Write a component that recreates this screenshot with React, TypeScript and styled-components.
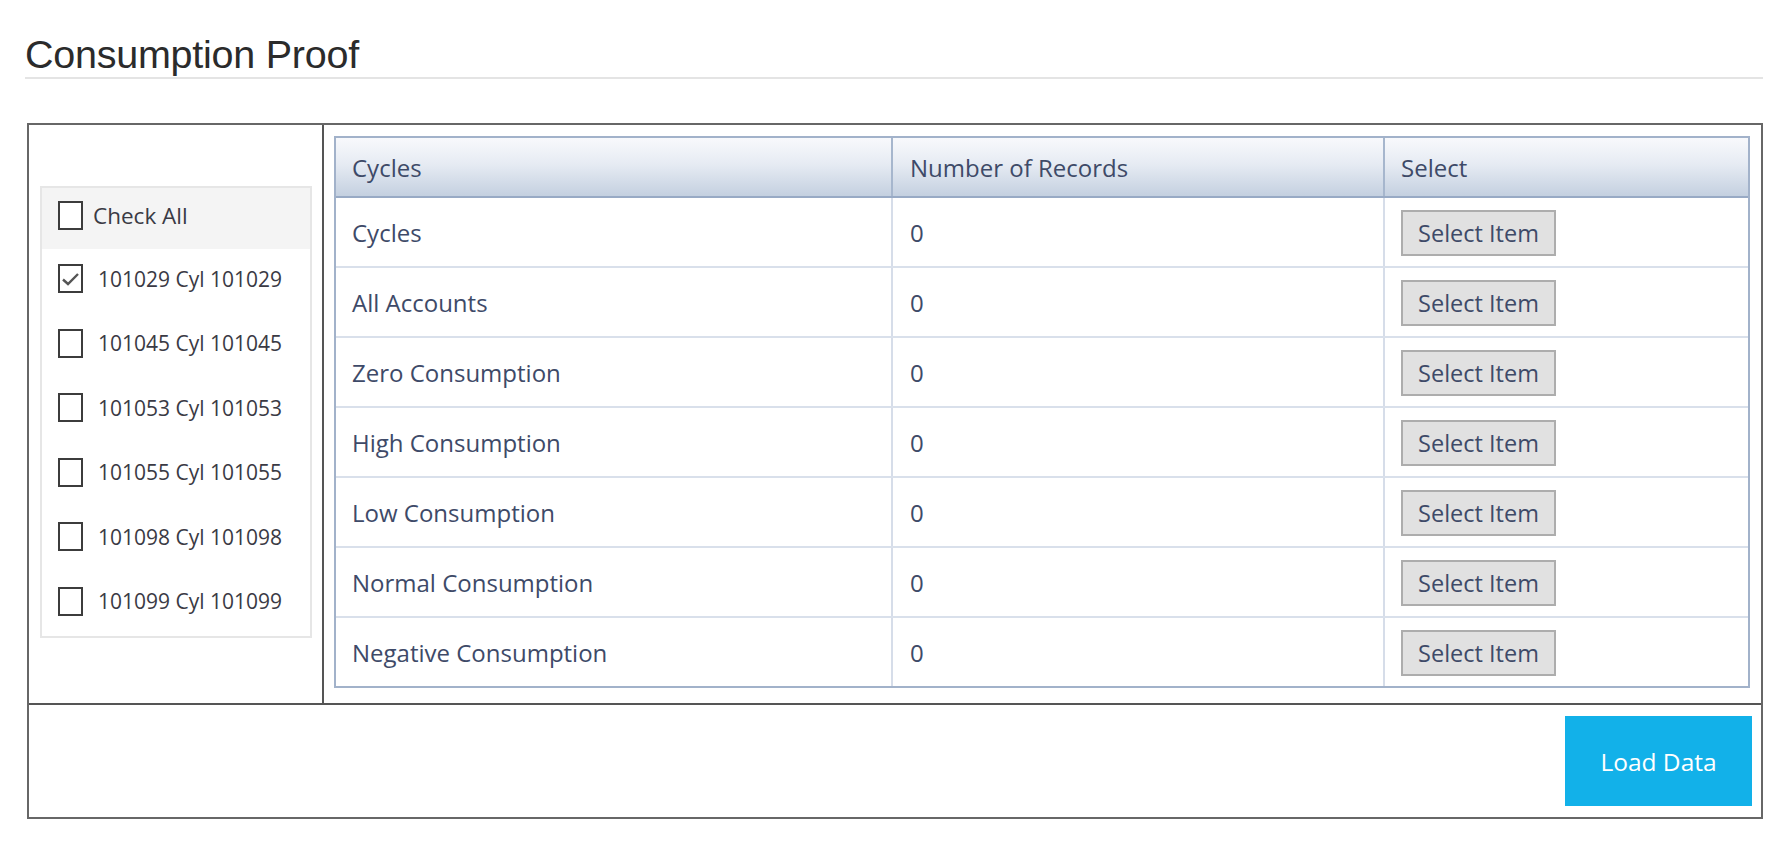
import React from "react";
import styled, { createGlobalStyle } from "styled-components";

const Global = createGlobalStyle`
  html, body { margin: 0; padding: 0; background: #ffffff; }
  body { font-family: "Open Sans", "Noto Sans", sans-serif; }
  * { box-sizing: border-box; }
`;

const Page = styled.div`
  width: 1780px;
  padding: 32px 0 0 25px;
`;

const Title = styled.h1`
  margin: 0;
  width: 1738px;
  height: 47px;
  font-family: "Liberation Sans", Arial, sans-serif;
  font-weight: 400;
  font-size: 39.5px;
  line-height: 45px;
  color: #2b2b2b;
  border-bottom: 2px solid #e4e4e4;
  letter-spacing: -0.25px;
`;

const Frame = styled.div`
  margin: 44px 0 0 2px;
  width: 1736px;
  height: 696px;
  border: 2px solid #676767;
  display: grid;
  grid-template-columns: 295px 1fr;
  grid-template-rows: 580px 1fr;
`;

const LeftPanel = styled.div`
  border-right: 2px solid #555555;
  border-bottom: 2px solid #555555;
  padding: 61px 0 0 11px;
`;

const RightPanel = styled.div`
  border-bottom: 2px solid #555555;
  padding: 11px 9px 0 10px;
`;

const Footer = styled.div`
  grid-column: 1 / span 2;
  display: flex;
  justify-content: flex-end;
  align-items: flex-start;
  padding: 11px 9px 0 0;
`;

const ListBox = styled.div`
  width: 272px;
  border: 2px solid #e6e6e6;
  display: flex;
  flex-direction: column;
`;

const ListRow = styled.label<{ $head?: boolean }>`
  display: flex;
  align-items: center;
  height: ${(p) => (p.$head ? "61px" : "64.5px")};
  padding-bottom: ${(p) => (p.$head ? "7px" : "5px")};
  background: ${(p) => (p.$head ? "#f4f4f4" : "#ffffff")};
  padding-left: 16px;
  gap: ${(p) => (p.$head ? "10px" : "15px")};
  font-size: ${(p) => (p.$head ? "22.5px" : "21px")};
  color: #3a3a44;
  white-space: nowrap;
  cursor: pointer;
`;

const Box = styled.span`
  flex: none;
  width: 25px;
  height: 29px;
  border: 2px solid #3c3c3c;
  background: #ffffff;
  display: flex;
  align-items: center;
  justify-content: center;
`;

const Table = styled.div`
  border: 2px solid #a2b2ca;
  width: 1416px;
`;

const Row = styled.div<{ $head?: boolean }>`
  display: grid;
  grid-template-columns: 557px 492px 1fr;
  height: ${(p) => (p.$head ? "60px" : "70px")};
  background: ${(p) =>
    p.$head ? "linear-gradient(to bottom, #f8f9fc 0%, #e6ebf3 45%, #c4d0e0 100%)" : "#ffffff"};
  border-bottom: 2px solid ${(p) => (p.$head ? "#98aac5" : "#d9e0eb")};
  &:last-child { border-bottom: none; height: 68px; }
`;

const Cell = styled.div<{ $head?: boolean }>`
  display: flex;
  align-items: center;
  padding-left: 16px;
  font-size: 24px;
  color: #3e4a68;
  white-space: nowrap;
  border-right: 2px solid ${(p) => (p.$head ? "#a6b6cd" : "#d6dde9")};
  &:nth-child(2) { padding-left: 17px; }
  &:last-child { border-right: none; padding-left: 16px; }
`;

const SelectButton = styled.button`
  width: 155px;
  height: 46px;
  margin-top: 1px;
  background: #e1e1e1;
  border: 2px solid #adadad;
  border-radius: 0;
  padding: 0;
  font-family: "Open Sans", "Noto Sans", sans-serif;
  font-size: 23.5px;
  color: #3e4a68;
  cursor: pointer;
`;

const LoadButton = styled.button`
  width: 187px;
  height: 90px;
  background: #12b1e9;
  border: none;
  border-radius: 0;
  color: #ffffff;
  font-family: "Open Sans", "Noto Sans", sans-serif;
  font-size: 24.5px;
  cursor: pointer;
`;

const cycles = [
  { id: "101029", checked: true },
  { id: "101045", checked: false },
  { id: "101053", checked: false },
  { id: "101055", checked: false },
  { id: "101098", checked: false },
  { id: "101099", checked: false },
];

const rows = [
  "Cycles",
  "All Accounts",
  "Zero Consumption",
  "High Consumption",
  "Low Consumption",
  "Normal Consumption",
  "Negative Consumption",
];

const CheckBox = ({ checked }: { checked: boolean }) => (
  <Box>
    {checked && (
      <svg width="19" height="16" viewBox="0 0 19 16">
        <path d="M2 8.5 L7 13 L17 3" fill="none" stroke="#555555" strokeWidth="2.4" />
      </svg>
    )}
  </Box>
);

export default function App() {
  return (
    <>
      <Global />
      <Page>
        <Title>Consumption Proof</Title>
        <Frame>
          <LeftPanel>
            <ListBox>
              <ListRow $head>
                <CheckBox checked={false} />
                Check All
              </ListRow>
              {cycles.map((c) => (
                <ListRow key={c.id}>
                  <CheckBox checked={c.checked} />
                  {`${c.id} Cyl ${c.id}`}
                </ListRow>
              ))}
            </ListBox>
          </LeftPanel>
          <RightPanel>
            <Table>
              <Row $head>
                <Cell $head>Cycles</Cell>
                <Cell $head>Number of Records</Cell>
                <Cell $head>Select</Cell>
              </Row>
              {rows.map((r) => (
                <Row key={r}>
                  <Cell>{r}</Cell>
                  <Cell>0</Cell>
                  <Cell>
                    <SelectButton>Select Item</SelectButton>
                  </Cell>
                </Row>
              ))}
            </Table>
          </RightPanel>
          <Footer>
            <LoadButton>Load Data</LoadButton>
          </Footer>
        </Frame>
      </Page>
    </>
  );
}
